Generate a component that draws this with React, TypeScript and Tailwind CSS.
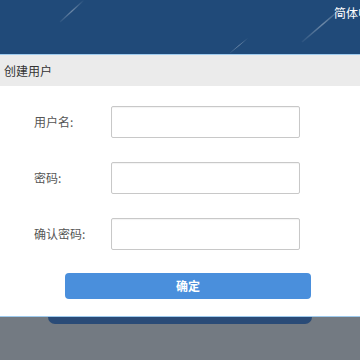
import React from 'react';

const font = { fontFamily: '"Noto Sans CJK SC", "Liberation Sans", sans-serif' };

// header streaks (decoration)
const Streaks = () => (
  <svg className="absolute inset-0" width="360" height="54" viewBox="0 0 360 54">
    <defs>
      <linearGradient id="s1" x1="0" y1="1" x2="1" y2="0">
        <stop offset="0" stopColor="#ffffff" stopOpacity="0.05" />
        <stop offset="0.5" stopColor="#ffffff" stopOpacity="0.35" />
        <stop offset="1" stopColor="#ffffff" stopOpacity="0" />
      </linearGradient>
    </defs>
    <line x1="60" y1="22" x2="84" y2="0" stroke="url(#s1)" strokeWidth="1.2" />
    <line x1="302" y1="42" x2="344" y2="6" stroke="url(#s1)" strokeWidth="1.6" />
    <line x1="230" y1="53" x2="248" y2="38" stroke="url(#s1)" strokeWidth="1" />
  </svg>
);

const Field = ({ label }: { label: string }) => (
  <div className="flex items-center h-[32px]">
    <span className="w-[77px] text-[12px] text-[#555]">{label}</span>
    <input
      className="w-[189px] h-[32px] border border-[#c8c8c8] rounded-[2px] bg-white outline-none shadow-[inset_0_1px_1px_rgba(0,0,0,0.05)]"
      type="text"
    />
  </div>
);

export default function App() {
  return (
    <div className="w-[360px] h-[360px] overflow-hidden bg-[#737a82] flex flex-col" style={font}>
      {/* top bar */}
      <div className="relative h-[54px] bg-[#204a79] overflow-hidden">
        <Streaks />
        <div className="relative pl-[334px] pt-[4px] whitespace-nowrap text-[12px] text-white">简体中文</div>
      </div>
      <div className="h-px bg-[#9fcbee]" />

      {/* dialog */}
      <div className="bg-white">
        <div className="h-[31px] bg-[#ebebeb] flex items-center pl-[4px] text-[12px] text-[#333]">创建用户</div>
        <div className="pt-[20px] pl-[34px] flex flex-col gap-[24px]">
          <Field label="用户名:" />
          <Field label="密码:" />
          <Field label="确认密码:" />
        </div>
        <div className="pt-[22px] pb-[17px] pl-[65px]">
          <button className="w-[246px] h-[26px] rounded-[4px] bg-[#4a8fdc] text-white text-[12px] font-bold">
            确定
          </button>
        </div>
      </div>
      <div className="h-px bg-[#9fcbee]" />

      {/* panel behind the dialog */}
      <div className="mx-[48px] h-[7px] rounded-b-[8px] bg-[#2a4b77]" />
    </div>
  );
}
